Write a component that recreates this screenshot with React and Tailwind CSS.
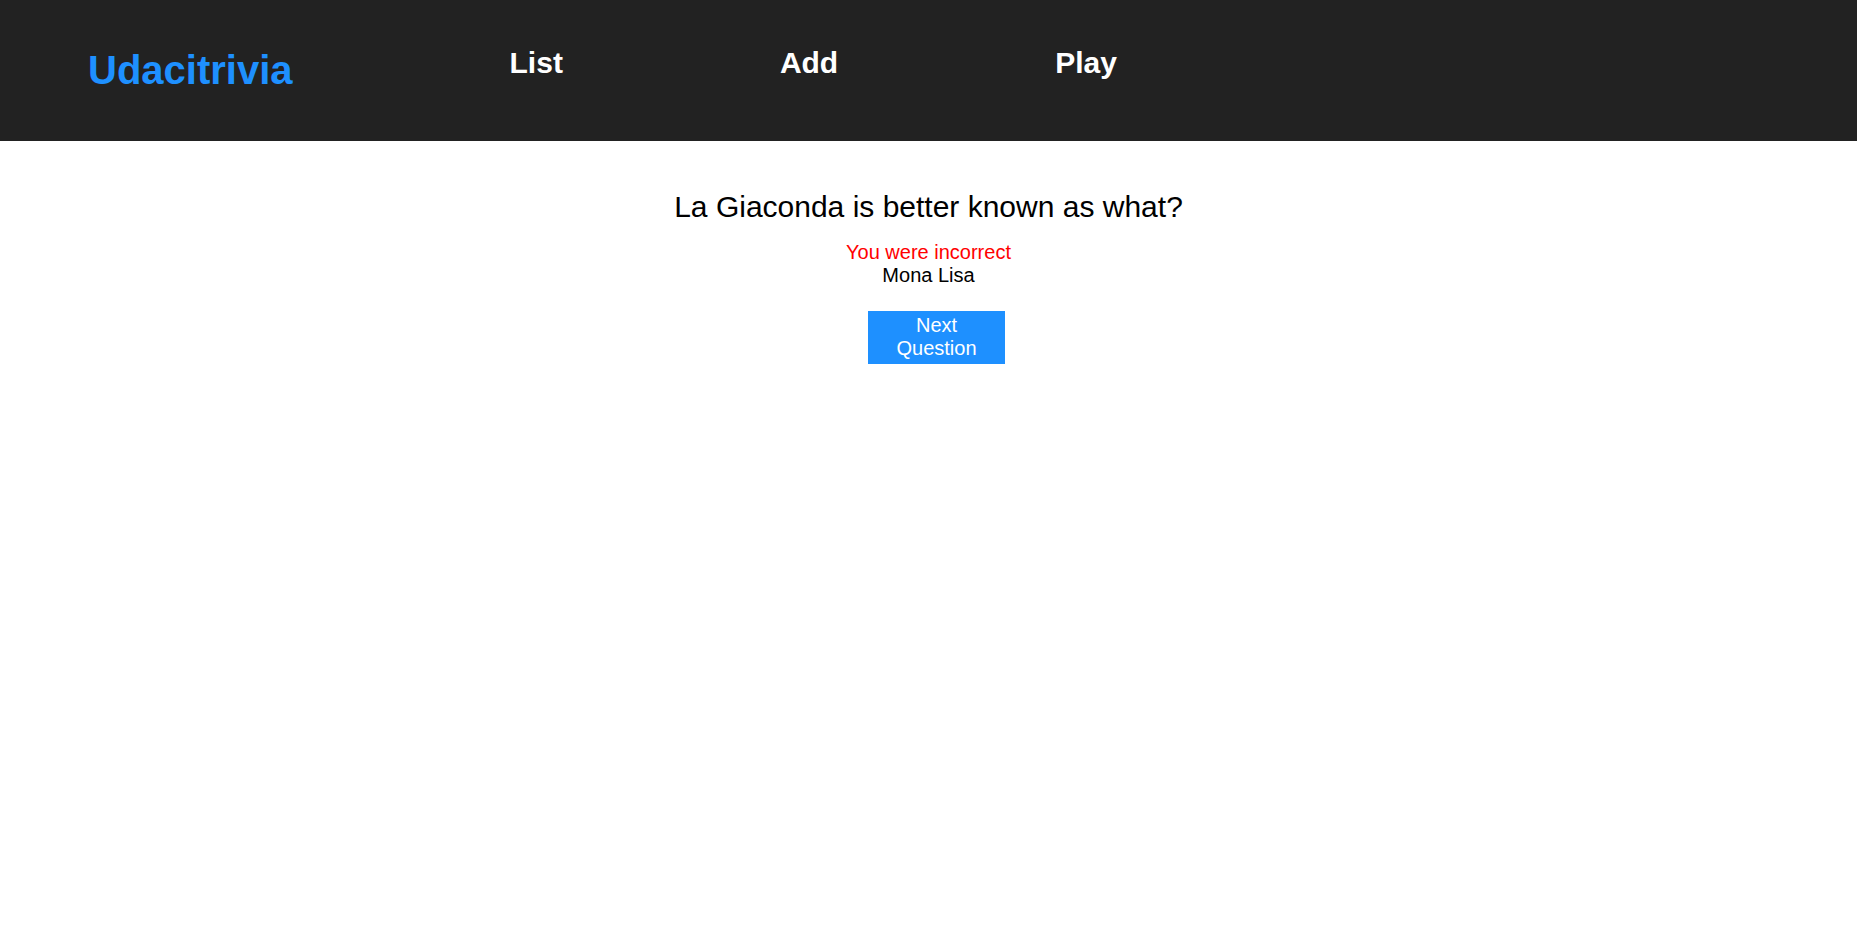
import React from 'react';

const navItems = ['List', 'Add', 'Play'];

const App = () => {
  return (
    <div className="min-h-screen bg-white font-['Liberation_Sans',Arial,sans-serif]">
      {/* Top bar */}
      <header className="flex items-start h-[141px] bg-[#222222] pl-[88px] pt-[47px] gap-[217px]">
        <h1 className="text-[40px] leading-[46px] font-bold text-[#1e90ff]">Udacitrivia</h1>
        {navItems.map((item) => (
          <h2 key={item} className="-mt-[1px] text-[30px] leading-[34.5px] font-bold text-white">
            {item}
          </h2>
        ))}
      </header>

      {/* Quiz card */}
      <div className="flex flex-col items-center pt-[49px] text-black">
        <h2 className="text-[30px] leading-[34.5px]">La Giaconda is better known as what?</h2>
        <div className="mt-[16px] text-[20px] leading-[23px] text-[#ff0000]">You were incorrect</div>
        <div className="text-[20px] leading-[23px]">Mona Lisa</div>
        <button className="mt-[24px] ml-[16px] flex flex-col items-center justify-center w-[137px] h-[53px] bg-[#1e90ff] text-white text-[20px] leading-[23px]">
          <span>Next</span>
          <span>Question</span>
        </button>
      </div>
    </div>
  );
};

export default App;
